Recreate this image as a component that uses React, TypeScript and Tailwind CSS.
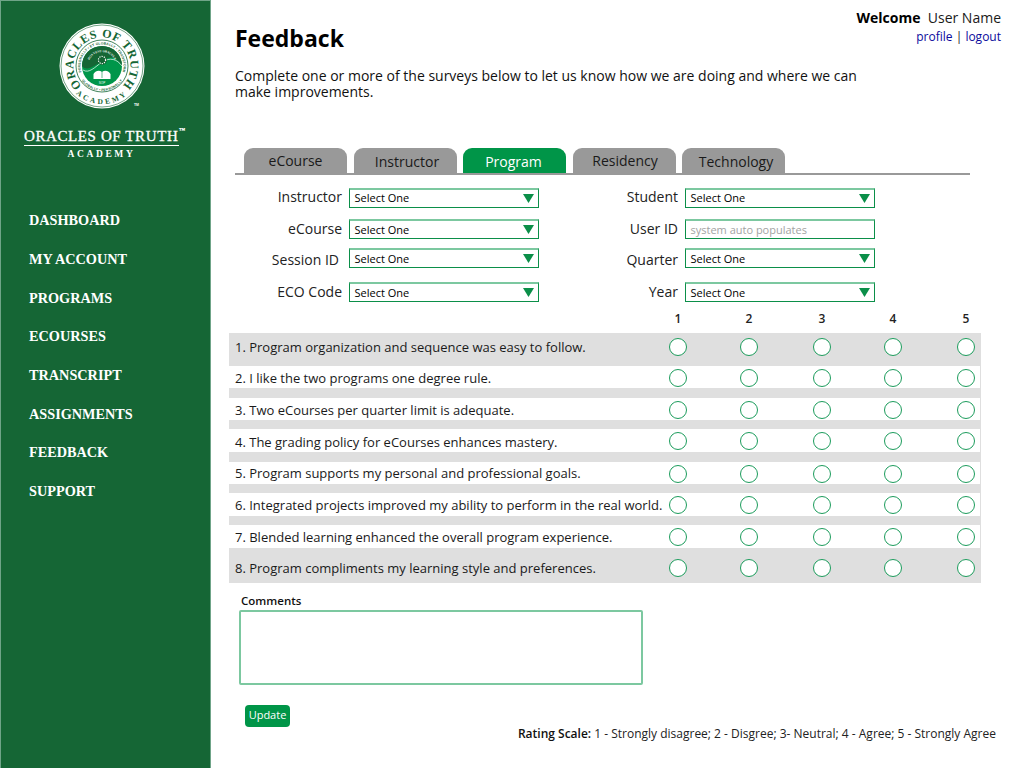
import type { ReactNode } from "react";

const NAV_ITEMS = ["Dashboard", "My Account", "Programs", "eCourses", "Transcript", "Assignments", "Feedback", "Support"];
const SCORE_CELLS = ["", "ml-[53px]", "ml-[55px]", "ml-[53px]", "ml-[55px]"];

const TABS = [
  { name: "eCourse", nudge: "" },
  { name: "Instructor", nudge: "pt-[2px] pl-[4px]" },
  { name: "Program", nudge: "pt-[2px] pr-[2px]" },
  { name: "Residency", nudge: "pl-[2px]" },
  { name: "Technology", nudge: "pt-[2px] pl-[5px]" },
];

const QUESTIONS = [
  { text: "1. Program organization and sequence was easy to follow.", row: "h-[33px] pb-[5px] bg-[#dfdfdf]", label: "pt-[2px]" },
  { text: "2. I like the two programs one degree rule.", row: "h-[22px] mb-[10px] pt-[2px] mr-px bg-white", label: "pt-[2px]" },
  { text: "3. Two eCourses per quarter limit is adequate.", row: "h-[22px] mb-[9px] pt-[2px] mr-px bg-white", label: "pt-[2px]" },
  { text: "4. The grading policy for eCourses enhances mastery.", row: "h-[23px] mb-[10px] pt-px mr-px bg-white", label: "pt-[4px]" },
  { text: "5. Program supports my personal and professional goals.", row: "h-[22px] mb-[9px] pt-[2px] mr-px bg-white", label: "" },
  { text: "6. Integrated projects improved my ability to perform in the real world.", row: "h-[23px] mb-[9px] pt-px mr-px bg-white", label: "pt-[2px]" },
  { text: "7. Blended learning enhanced the overall program experience.", row: "h-[23px] pt-px mr-px bg-white", label: "pt-[2px]" },
  { text: "8. Program compliments my learning style and preferences.", row: "h-[35px] pt-[5px] bg-[#dfdfdf]", label: "pt-[2px]" },
];

function Logo() {
  return (
    <svg viewBox="0 0 100 100" className="ml-[51px] h-[100px] w-[100px]">
      <defs>
        <path id="logo-top" d="M 50 78.5 A 28.5 28.5 0 1 1 50 21.5 A 28.5 28.5 0 1 1 50 78.5" />
        <path id="logo-bottom" d="M 12 50 A 38 38 0 0 0 88 50" />
        <path id="logo-ring-top" d="M 50 71.5 A 21.5 21.5 0 1 1 50 28.5 A 21.5 21.5 0 1 1 50 71.5" />
        <path id="logo-ring-bottom" d="M 25 50 A 25 25 0 0 0 75 50" />
        <path id="logo-motto" d="M 36 50 A 14 14 0 0 1 64 50" />
      </defs>
      <circle cx="50" cy="50" r="42.5" fill="#ffffff" />
      <circle cx="50" cy="50" r="41" fill="none" stroke="#156635" strokeWidth="0.6" />
      <text fill="#156635" fontFamily="'Liberation Serif', serif" fontSize="12" fontWeight="700">
        <textPath href="#logo-top" startOffset="50%" textAnchor="middle" letterSpacing="0.7">
          ORACLES OF TRUTH
        </textPath>
      </text>
      <text fill="#156635" fontFamily="'Liberation Serif', serif" fontSize="7.5" fontWeight="700">
        <textPath href="#logo-bottom" startOffset="50%" textAnchor="middle" letterSpacing="2.6">
          ACADEMY
        </textPath>
      </text>
      <circle cx="50" cy="50" r="26" fill="#ffffff" stroke="#156635" strokeWidth="0.8" />
      <text fill="#156635" fontFamily="'Liberation Sans', sans-serif" fontSize="3.4" fontWeight="700">
        <textPath href="#logo-ring-top" startOffset="50%" textAnchor="middle" letterSpacing="0.15">
          PERSONALLY • ET GLOBALLY • TRANSFORM
        </textPath>
      </text>
      <text fill="#156635" fontFamily="'Liberation Sans', sans-serif" fontSize="3.4" fontWeight="700">
        <textPath href="#logo-ring-bottom" startOffset="50%" textAnchor="middle" letterSpacing="0.15">
          GLOBALLY • PERSONALLY
        </textPath>
      </text>
      <circle cx="50" cy="50" r="20" fill="#00964a" />
      <path d="M 30 50 A 20 20 0 0 1 70 50 C 65 41 59 39 50 45 C 42 50 35 56 30 50 Z" fill="#156635" />
      <path d="M 31 54 C 37 58 43 51 50 46 C 58 41 65 43 70 50" fill="none" stroke="#ffffff" strokeWidth="0.7" />
      <text fill="#ffffff" fontFamily="'Liberation Serif', serif" fontSize="3" fontWeight="700">
        <textPath href="#logo-motto" startOffset="50%" textAnchor="middle">
          HOS VENT ORACULA
        </textPath>
      </text>
      <circle cx="50" cy="44" r="5" fill="#156635" />
      <circle cx="50" cy="44" r="3.6" fill="none" stroke="#ffffff" strokeWidth="1.2" strokeDasharray="1.2 1.1" />
      <path d="M 41.5 58 C 44 54 47.5 54 50 56 C 52.5 54 56 54 58.5 58 L 58.5 63 L 41.5 63 Z" fill="#ffffff" />
      <path d="M 50 56 L 50 62" stroke="#00964a" strokeWidth="0.6" />
      <text x="50" y="67.5" textAnchor="middle" fill="#ffffff" fontFamily="'Liberation Sans', sans-serif" fontSize="3">
        SOP
      </text>
      <text x="82" y="90" fill="#ffffff" fontFamily="'Liberation Sans', sans-serif" fontSize="3.4" fontWeight="700">
        TM
      </text>
    </svg>
  );
}

function Sidebar() {
  return (
    <aside className="h-[768px] w-[211px] shrink-0 border-x border-t border-[#6fa488] bg-[#156635] pt-[15px] font-['Liberation_Serif',serif] text-white">
      <Logo />
      <div className="mt-[12px] ml-[23px] w-[155px]">
        <div className="relative border-b border-white pb-px text-[15px] leading-[16px] tracking-[0.6px] whitespace-nowrap [-webkit-text-stroke:0.3px_white]">
          ORACLES OF TRUTH
          <span className="absolute top-[-2px] left-[155px] text-[6px] leading-[8px]">™</span>
        </div>
        <div className="mt-[2px] text-center text-[9.5px] leading-[12px] font-bold tracking-[2.6px]">ACADEMY</div>
      </div>
      <nav className="mt-[51.3px] ml-[28px] flex flex-col gap-[20.7px]">
        {NAV_ITEMS.map((item) => (
          <a key={item} className="text-[14.25px] leading-[18px] font-bold uppercase">
            {item}
          </a>
        ))}
      </nav>
    </aside>
  );
}

function Field({ label, labelClass, wide, children }: { label: string; labelClass?: string; wide?: boolean; children: ReactNode }) {
  return (
    <div className={wide ? "ml-[8px] flex items-center" : "flex items-center"}>
      <label className={`w-[131px] text-right text-[14px] leading-[20px] text-[#222] ${labelClass ?? ""}`}>{label}</label>
      <div className="ml-[7px] flex h-[20px] w-[190px] items-center justify-between border border-t-2 border-[#0b8f49] border-t-[#7cc8a0] pr-[4px] pl-[4.5px] text-[11px] text-black">
        {children}
      </div>
    </div>
  );
}

function SelectOne({ textClass }: { textClass: string }) {
  return (
    <>
      <span className={textClass}>Select One</span>
      <svg viewBox="0 0 11 9" className="h-[9px] w-[11px]">
        <path d="M0 0 H11 L5.5 9 Z" fill="#0b8f49" />
      </svg>
    </>
  );
}

function FormRow({ className, left, right, leftClass, rightClass, textClass }: { className: string; left: string; right: string; leftClass: string; rightClass: string; textClass: string }) {
  return (
    <div className={`flex ${className}`}>
      <Field label={left} labelClass={leftClass}>
        <SelectOne textClass={textClass} />
      </Field>
      <Field label={right} labelClass={rightClass} wide>
        {right === "User ID" ? <span className={`text-[#a3a3a3] ${textClass}`}>system auto populates</span> : <SelectOne textClass={textClass} />}
      </Field>
    </div>
  );
}

export default function App() {
  return (
    <div className="flex h-[768px] w-[1024px] overflow-hidden bg-white font-['Open_Sans',sans-serif] text-[#1a1a1a]">
      <Sidebar />
      <main className="min-w-0 flex-1">
        <header className="flex h-[148px] justify-between">
          <div className="ml-[24px] w-[600px] pt-[22px]">
            <h1 className="text-[23px] leading-[32px] font-bold text-black">Feedback</h1>
            <p className="mt-[14px] w-[640px] text-[14px] leading-[16px] text-[#111]">
              Complete one or more of the surveys below to let us know how we are doing and where we can make improvements.
            </p>
          </div>
          <div className="shrink-0 pt-[9px] pr-[23px] text-right whitespace-nowrap">
            <div className="text-[14px] leading-[18px]">
              <b className="text-black">Welcome</b>&nbsp; User Name
            </div>
            <div className="mt-px text-[12px] leading-[18px]">
              <a className="text-[#0a0a9c]">profile</a> | <a className="text-[#0a0a9c]">logout</a>
            </div>
          </div>
        </header>

        <div className="ml-[24px] flex h-[27px] w-[735px] gap-[6.5px] border-b-2 border-[#999] pl-[9px]">
          {TABS.map((tab) => (
            <button
              key={tab.name}
              className={`h-[25px] w-[103px] rounded-t-[9px] text-[14px] ${tab.nudge} ${tab.name === "Program" ? "bg-[#009548] text-white" : "bg-[#999] text-[#1a1a1a]"}`}
            >
              {tab.name}
            </button>
          ))}
        </div>

        <FormRow className="mt-[13px]" left="Instructor" right="Student" leftClass="-translate-y-px" rightClass="-translate-y-px" textClass="" />
        <FormRow className="mt-[11px]" left="eCourse" right="User ID" leftClass="" rightClass="" textClass="pt-[2px]" />
        <FormRow className="mt-[9px]" left="Session ID" right="Quarter" leftClass="translate-y-[2px] -translate-x-[3px]" rightClass="translate-y-[2px]" textClass="pt-[2px]" />
        <FormRow className="mt-[14px]" left="ECO Code" right="Year" leftClass="" rightClass="" textClass="pt-[2px]" />

        <div className="mt-[9px] ml-[458px] flex h-[16px] text-[12px] leading-[16px] font-semibold text-[#222]">
          {SCORE_CELLS.map((cell, i) => (
            <span key={i} className={`w-[18px] text-center ${cell}`}>
              {i + 1}
            </span>
          ))}
        </div>

        <div className="mt-[6px] ml-[18px] w-[752px] bg-[#dfdfdf]">
          {QUESTIONS.map((question) => (
            <div key={question.text} className={`flex items-center ${question.row}`}>
              <span className={`w-[440px] pl-[6px] text-[13px] whitespace-nowrap text-[#1a1a1a] ${question.label}`}>{question.text}</span>
              {SCORE_CELLS.map((cell, i) => (
                <span key={i} className={`h-[18px] w-[18px] rounded-full border border-[#1c9c5c] bg-white ${cell}`} />
              ))}
            </div>
          ))}
        </div>

        <label className="mt-[10px] ml-[30px] block text-[11.5px] leading-[16px] font-semibold text-[#111]">Comments</label>
        <textarea className="mt-px ml-[28px] block h-[75px] w-[404px] resize-none rounded-[2px] border-2 border-[#7cc8a0]" />

        <div className="mt-[20px] flex items-start justify-between pr-[28px] pl-[34px]">
          <button className="h-[22px] w-[45px] rounded-[4px] bg-[#009548] pb-px text-[11px] text-white">Update</button>
          <p className="mt-[21px] text-[12px] leading-[16px] text-[#222]">
            <span className="font-semibold text-[#111]">Rating Scale:</span> 1 - Strongly disagree; 2 - Disgree; 3- Neutral; 4 - Agree; 5 - Strongly Agree
          </p>
        </div>
      </main>
    </div>
  );
}
